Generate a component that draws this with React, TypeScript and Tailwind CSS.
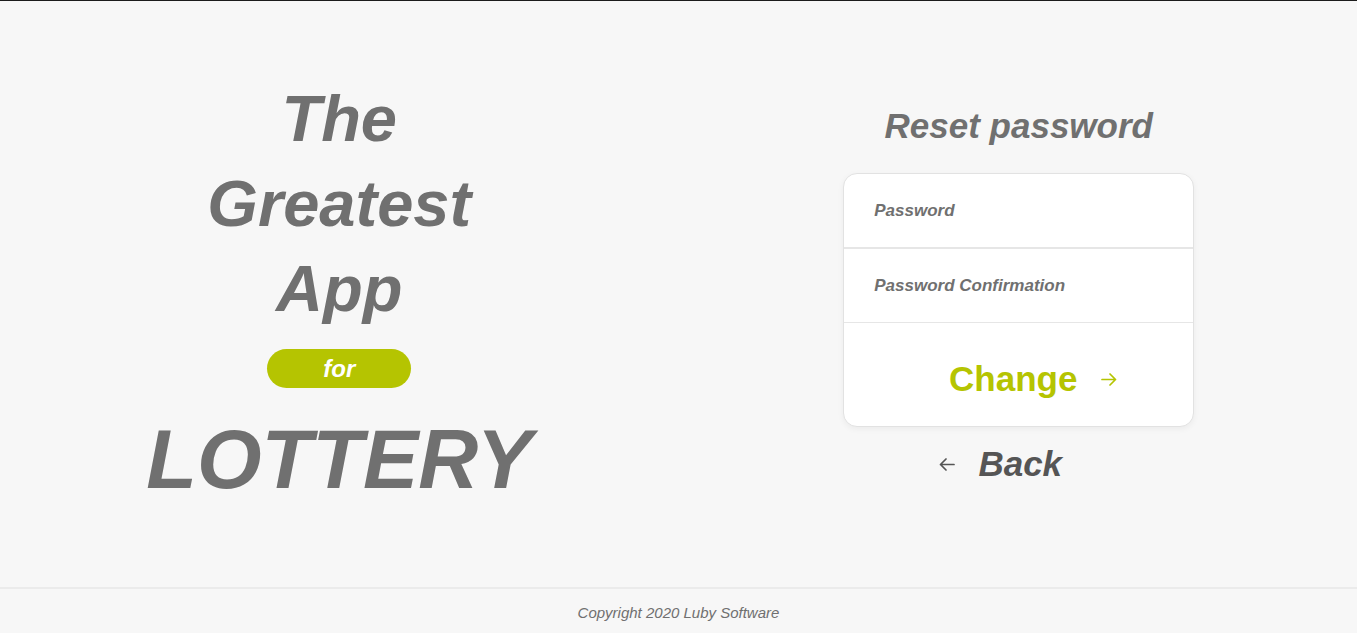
import React from 'react';

const FONT = { fontFamily: '"Liberation Sans", Arial, Helvetica, sans-serif' };

function ArrowIcon({ dir = 'right', className = '' }: { dir?: 'right' | 'left'; className?: string }) {
  return (
    <svg
      viewBox="0 0 16 13"
      width={16}
      height={13}
      fill="none"
      stroke="currentColor"
      strokeWidth={1.7}
      strokeLinecap="round"
      strokeLinejoin="round"
      className={`${dir === 'left' ? 'rotate-180' : ''} ${className}`}
      aria-hidden
    >
      <path d="M1 6.5h13.5M9 1l5.5 5.5L9 12" />
    </svg>
  );
}

const Hero: React.FC = () => (
  <div className="flex flex-col items-center text-[#707070] italic font-bold">
    <span className="text-[65px] leading-[85px]">The</span>
    <span className="text-[65px] leading-[85px]">Greatest</span>
    <span className="text-[65px] leading-[85px]">App</span>
    <span className="mt-[18px] flex h-[39px] w-[144px] items-center justify-center rounded-full bg-[#b5c401] text-[24px] text-white">
      for
    </span>
    <span className="mt-[22px] text-[83px] leading-[100px]">LOTTERY</span>
  </div>
);

const ResetForm: React.FC = () => (
  <div className="flex flex-col items-center">
    <h1 className="text-[35px] leading-[40px] font-bold italic text-[#707070]">Reset password</h1>
    <form
      className="mt-[27px] w-[351px] overflow-hidden rounded-[14px] border border-[#e2e2e2] bg-white shadow-[0_2px_6px_rgba(0,0,0,0.05)]"
      onSubmit={(e) => e.preventDefault()}
    >
      <input
        type="password"
        placeholder="Password"
        className="block h-[75px] w-full border-b-2 border-[#e6e6e6] px-[30px] text-[17px] font-bold italic text-[#707070] outline-none placeholder:text-[#707070]"
        style={FONT}
      />
      <input
        type="password"
        placeholder="Password Confirmation"
        className="block h-[74px] w-full border-b border-[#e6e6e6] px-[30px] text-[17px] font-bold italic text-[#707070] outline-none placeholder:text-[#707070]"
        style={FONT}
      />
      <button
        type="submit"
        className="flex h-[103px] w-full items-center justify-center gap-[24px] pl-[29px] pt-[10px] text-[35px] font-bold text-[#b5c401]"
        style={FONT}
      >
        Change
        <ArrowIcon />
      </button>
    </form>
    <button
      type="button"
      className="mt-[17px] mr-[36px] flex items-center gap-[23px] text-[35px] leading-[40px] font-bold italic text-[#555555]"
      style={FONT}
    >
      <ArrowIcon dir="left" />
      Back
    </button>
  </div>
);

export default function App() {
  return (
    <div className="flex h-[633px] flex-col border-t border-[#1c1c1c] bg-[#f7f7f7]" style={FONT}>
      <main className="grid flex-1 grid-cols-2">
        <div className="flex items-center justify-center pb-[2px]">
          <Hero />
        </div>
        <div className="flex items-center justify-center pt-[2px] pl-[2px]">
          <ResetForm />
        </div>
      </main>
      <footer className="flex h-[46px] items-center justify-center border-t-2 border-[#ebebeb] pt-[5px] text-[15px] italic text-[#707070]">
        Copyright 2020 Luby Software
      </footer>
    </div>
  );
}
